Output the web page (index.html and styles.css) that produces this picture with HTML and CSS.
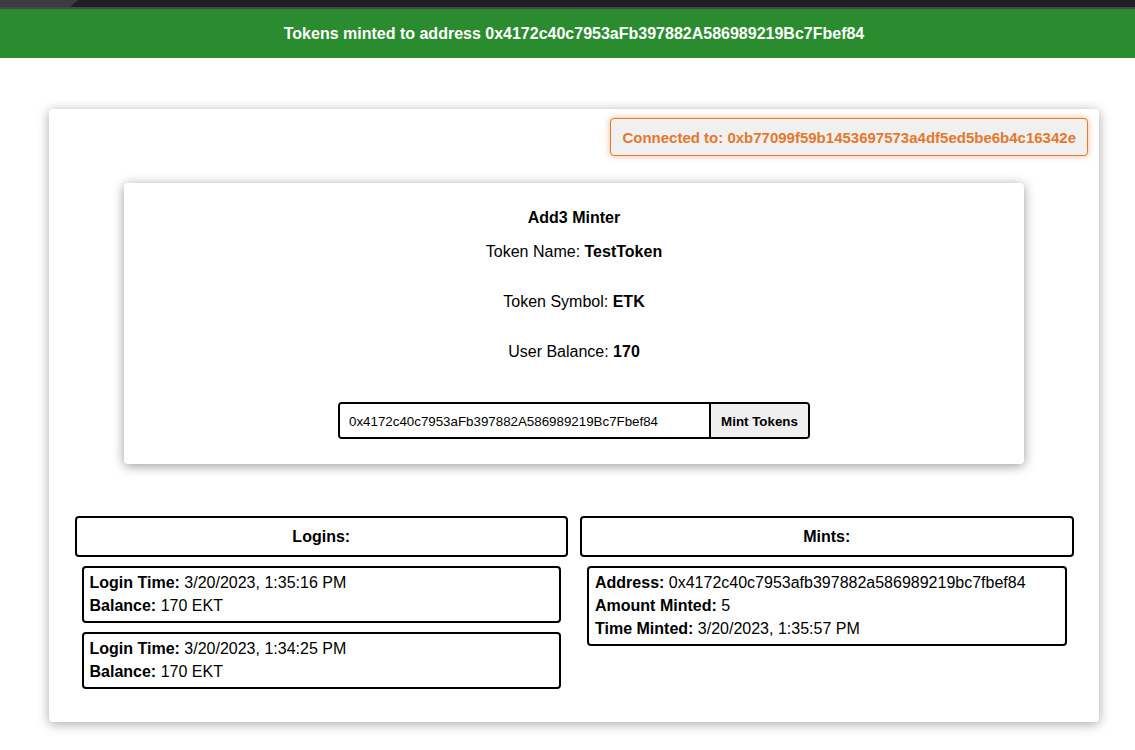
FILE: index.html
```html
<!DOCTYPE html>
<html>
<head>
<meta charset="utf-8">
<link rel="stylesheet" href="styles.css">
</head>
<body>
<div class="chrome"><div class="chrome-tab"></div><div class="chrome-rest"></div></div>
<div class="banner">Tokens minted to address 0x4172c40c7953aFb397882A586989219Bc7Fbef84</div>
<main class="page">
  <section class="card">
    <div class="badge-row">
      <div class="badge">Connected to: 0xb77099f59b1453697573a4df5ed5be6b4c16342e</div>
    </div>
    <div class="minter">
      <h3 class="minter-title">Add3 Minter</h3>
      <p class="info">Token Name: <b>TestToken</b></p>
      <p class="info">Token Symbol: <b>ETK</b></p>
      <p class="info">User Balance: <b>170</b></p>
      <div class="mint-form">
        <input class="mint-input" type="text" value="0x4172c40c7953aFb397882A586989219Bc7Fbef84">
        <button class="mint-btn">Mint Tokens</button>
      </div>
    </div>
    <div class="columns">
      <div class="col">
        <div class="col-head">Logins:</div>
        <div class="item">
          <p class="line"><b>Login Time:</b> 3/20/2023, 1:35:16 PM</p>
          <p class="line"><b>Balance:</b> 170 EKT</p>
        </div>
        <div class="item">
          <p class="line"><b>Login Time:</b> 3/20/2023, 1:34:25 PM</p>
          <p class="line"><b>Balance:</b> 170 EKT</p>
        </div>
      </div>
      <div class="col">
        <div class="col-head">Mints:</div>
        <div class="item">
          <p class="line"><b>Address:</b> 0x4172c40c7953afb397882a586989219bc7fbef84</p>
          <p class="line"><b>Amount Minted:</b> 5</p>
          <p class="line"><b>Time Minted:</b> 3/20/2023, 1:35:57 PM</p>
        </div>
      </div>
    </div>
  </section>
</main>
</body>
</html>
```

FILE: styles.css
```css
* { box-sizing: border-box; }
html, body { margin: 0; padding: 0; background: #fff; }
body {
  font-family: "Liberation Sans", Arial, Helvetica, sans-serif;
  color: #000;
  font-size: 16px;
}
.chrome {
  height: 9px;
  display: flex;
  background: #1f2023;
  border-bottom: 2px solid #47474c;
}
.chrome-tab {
  width: 78px;
  background: #3b3b40;
  clip-path: polygon(0 0, 100% 0, 90% 100%, 0 100%);
}
.chrome-rest { flex: 1; }
.banner {
  height: 49px;
  background: #2b8c2f;
  color: #fff;
  font-weight: bold;
  font-size: 16px;
  display: flex;
  align-items: center;
  justify-content: center;
  padding: 1px 0 0 13px;
}
.page {
  padding: 51px 36px 28px 49px;
}
.card {
  width: 1050px;
  background: #fff;
  border-radius: 4px;
  box-shadow: 0 2px 12px rgba(0,0,0,0.35);
  padding: 9px 11px 33px 11px;
}
.badge-row {
  display: flex;
  justify-content: flex-end;
}
.badge {
  background: #f0f0f0;
  border: 1px solid #e3792d;
  border-radius: 4px;
  box-shadow: 0 0 6px rgba(227,121,45,0.55);
  color: #e3792d;
  font-weight: bold;
  font-size: 15px;
  height: 38px;
  padding: 1px 11px 0;
  display: flex;
  align-items: center;
}
.minter {
  width: 900px;
  margin: 27px auto 0;
  background: #fff;
  border-radius: 4px;
  box-shadow: 0 2px 12px rgba(0,0,0,0.4);
  padding: 26px 20px 25px;
  display: flex;
  flex-direction: column;
  align-items: center;
}
.minter-title {
  margin: 0;
  font-size: 16px;
  line-height: 18px;
  font-weight: bold;
}
.info {
  margin: 16px 0 0;
  line-height: 18px;
}
.info + .info { margin-top: 32px; }
.mint-form {
  margin-top: 41px;
  display: flex;
  width: 472px;
  height: 37px;
  border: 2px solid #000;
  border-radius: 4px;
  overflow: hidden;
}
.mint-input {
  flex: 1;
  border: none;
  outline: none;
  padding: 1px 9px 0;
  font-family: "Liberation Sans", Arial, sans-serif;
  font-size: 13.333px;
  color: #000;
  background: #fff;
}
.mint-btn {
  width: 99px;
  border: none;
  border-left: 2px solid #000;
  background: #efefef;
  font-family: "Liberation Sans", Arial, sans-serif;
  font-size: 13.333px;
  font-weight: bold;
  color: #000;
  padding: 1px 0 0;
}
.columns {
  display: flex;
  gap: 12px;
  padding: 0 14.5px;
  margin-top: 52px;
}
.col {
  flex: 1;
  display: flex;
  flex-direction: column;
  gap: 9px;
}
.col-head {
  height: 41px;
  border: 2px solid #000;
  border-radius: 4px;
  font-weight: bold;
  display: flex;
  align-items: center;
  justify-content: center;
  padding-top: 1px;
}
.item {
  margin: 0 7px;
  border: 2px solid #000;
  border-radius: 4px;
  padding: 6px 6px 6px;
}
.line {
  margin: 0 0 5px;
  line-height: 18px;
}
.line:last-child { margin-bottom: 0; }
```
